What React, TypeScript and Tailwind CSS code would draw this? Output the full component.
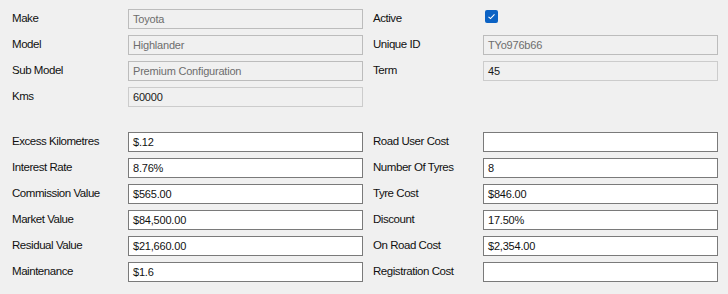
import React from "react";

type Kind = "disabled" | "readonly" | "enabled";

function Box({ value, kind, w }: { value?: string; kind: Kind; w: string }) {
  const base =
    "h-[20px] flex items-center pl-[4px] text-[11px] tracking-[-0.2px] leading-none whitespace-nowrap overflow-hidden border";
  const style =
    kind === "disabled"
      ? "bg-[#f0f0f0] border-[#bcbcbc] text-[#6d6d6d]"
      : kind === "readonly"
      ? "bg-[#f0f0f0] border-[#cccccc] text-[#1a1a1a]"
      : "bg-white border-[#7a7a7a] text-[#111]";
  return <div className={`${base} ${style} ${w}`}>{value}</div>;
}

const labelCls = "text-[11.5px] tracking-[-0.45px] text-[#111] leading-none";

function Field({
  label,
  value,
  kind,
  side,
}: {
  label: string;
  value?: string;
  kind: Kind;
  side: "l" | "r";
}) {
  return (
    <div className="flex items-center h-[20px]">
      <div className={`${side === "l" ? "w-[116px]" : "w-[110px]"} ${labelCls}`}>{label}</div>
      <Box value={value} kind={kind} w="w-[235px]" />
    </div>
  );
}

function Row({ children }: { children: React.ReactNode }) {
  return <div className="flex gap-[10px]">{children}</div>;
}

function Empty() {
  return <div className="w-[345px] h-[20px]" />;
}

export default function App() {
  return (
    <div
      className="w-[728px] h-[294px] bg-[#f0f0f0] pl-[12px] pt-[9px]"
      style={{ fontFamily: '"Liberation Sans", Arial, sans-serif' }}
    >
      <div className="flex flex-col gap-[6px]">
        <Row>
          <Field side="l" label="Make" value="Toyota" kind="disabled" />
          <div className="flex h-[20px]">
            <div className={`w-[112px] flex items-center ${labelCls}`}>Active</div>
            <div className="mt-[1px] w-[13px] h-[13px] rounded-[2px] bg-[#0b62c4] flex items-center justify-center">
              <svg width="9" height="9" viewBox="0 0 9 9">
                <path d="M1.5 4.8 L3.5 6.6 L7.5 2.4" fill="none" stroke="white" strokeWidth="1.1" />
              </svg>
            </div>
          </div>
        </Row>
        <Row>
          <Field side="l" label="Model" value="Highlander" kind="disabled" />
          <Field side="r" label="Unique ID" value="TYo976b66" kind="disabled" />
        </Row>
        <Row>
          <Field side="l" label="Sub Model" value="Premium Configuration" kind="disabled" />
          <Field side="r" label="Term" value="45" kind="readonly" />
        </Row>
        <Row>
          <Field side="l" label="Kms" value="60000" kind="readonly" />
          <Empty />
        </Row>
      </div>
      <div className="flex flex-col gap-[6px] mt-[25px]">
        <Row>
          <Field side="l" label="Excess Kilometres" value="$.12" kind="enabled" />
          <Field side="r" label="Road User Cost" value="" kind="enabled" />
        </Row>
        <Row>
          <Field side="l" label="Interest Rate" value="8.76%" kind="enabled" />
          <Field side="r" label="Number Of Tyres" value="8" kind="enabled" />
        </Row>
        <Row>
          <Field side="l" label="Commission Value" value="$565.00" kind="enabled" />
          <Field side="r" label="Tyre Cost" value="$846.00" kind="enabled" />
        </Row>
        <Row>
          <Field side="l" label="Market Value" value="$84,500.00" kind="enabled" />
          <Field side="r" label="Discount" value="17.50%" kind="enabled" />
        </Row>
        <Row>
          <Field side="l" label="Residual Value" value="$21,660.00" kind="enabled" />
          <Field side="r" label="On Road Cost" value="$2,354.00" kind="enabled" />
        </Row>
        <Row>
          <Field side="l" label="Maintenance" value="$1.6" kind="enabled" />
          <Field side="r" label="Registration Cost" value="" kind="enabled" />
        </Row>
      </div>
    </div>
  );
}
